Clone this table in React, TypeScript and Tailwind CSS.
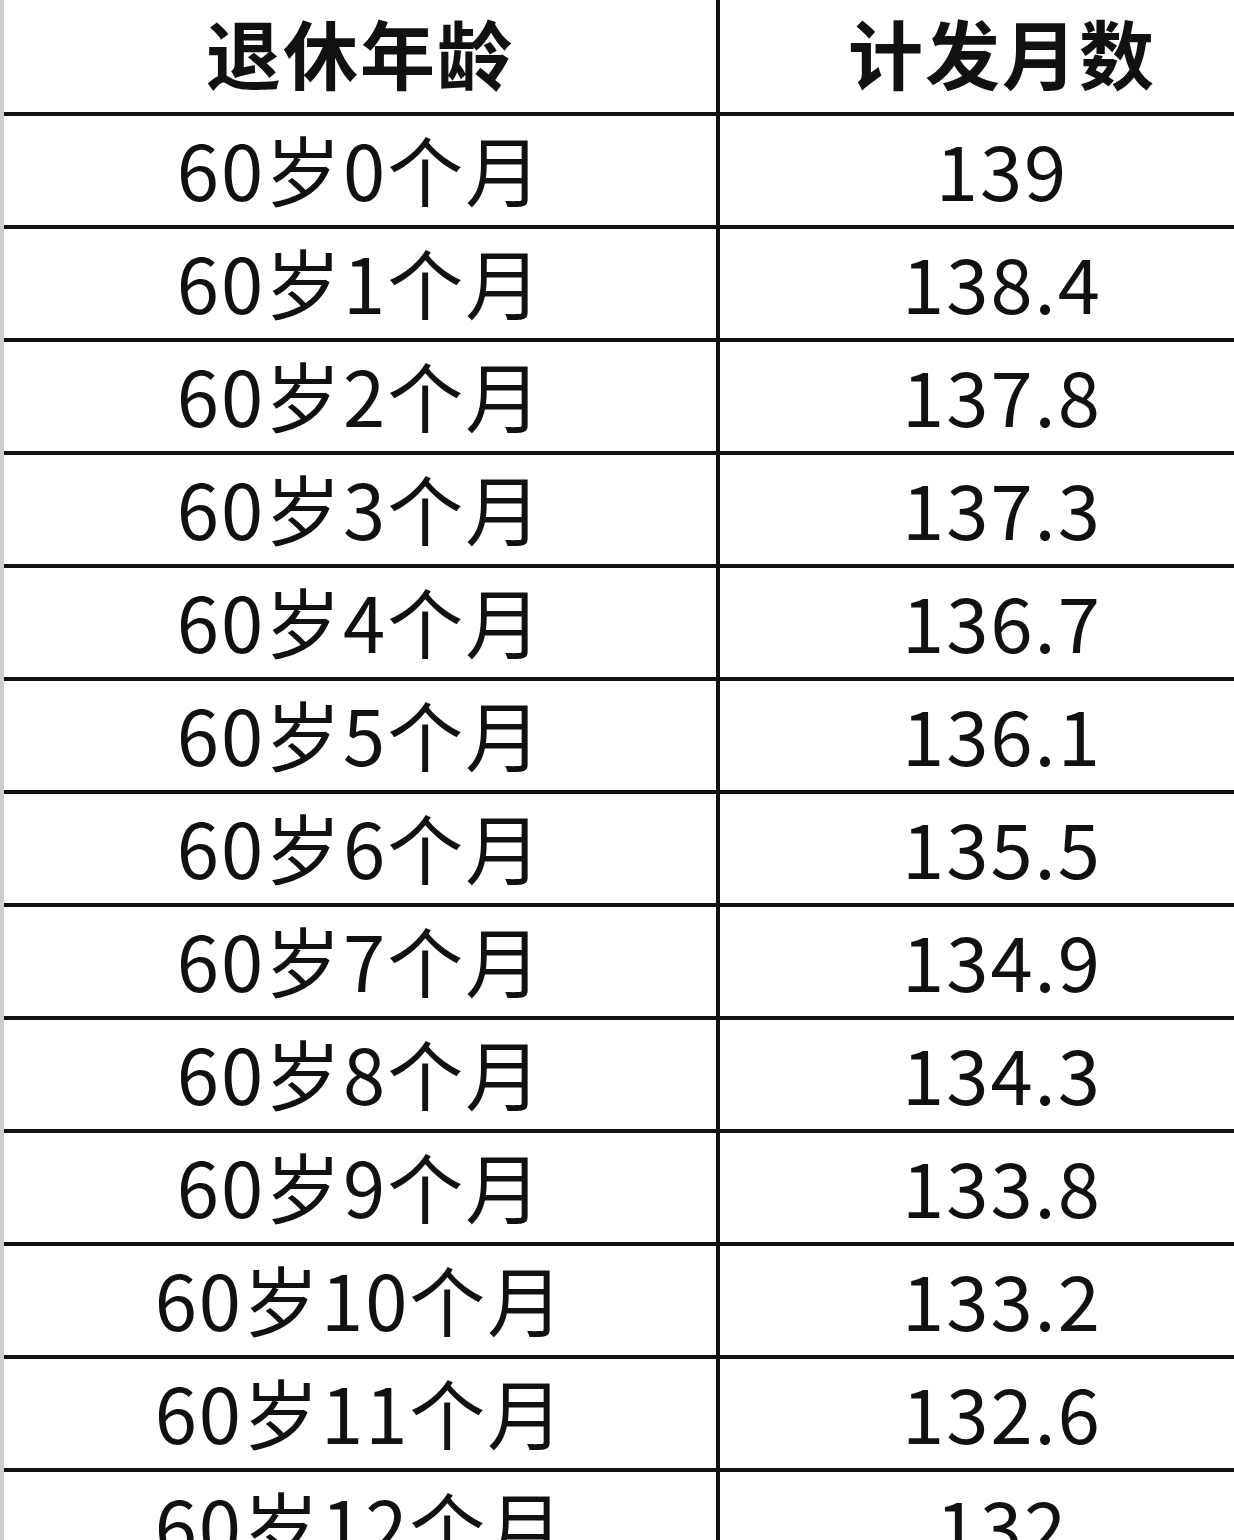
const rows = [
  ["60岁0个月", "139"],
  ["60岁1个月", "138.4"],
  ["60岁2个月", "137.8"],
  ["60岁3个月", "137.3"],
  ["60岁4个月", "136.7"],
  ["60岁5个月", "136.1"],
  ["60岁6个月", "135.5"],
  ["60岁7个月", "134.9"],
  ["60岁8个月", "134.3"],
  ["60岁9个月", "133.8"],
  ["60岁10个月", "133.2"],
  ["60岁11个月", "132.6"],
  ["60岁12个月", "132"],
];

const font = { fontFamily: '"Noto Sans CJK SC", "Noto Sans", sans-serif' };

export default function App() {
  return (
    <div className="w-[1234px] h-[1540px] overflow-hidden bg-white text-[#111]" style={font}>
      <div className="w-[1284px] border-l-4 border-[#cfcfcf]">
        <div className="flex h-[116px] border-b-4 border-[#111]">
          <div className="w-[716px] border-r-4 border-[#111] flex items-center justify-center pb-[10px] text-[75px] font-bold leading-none tracking-[2px]">
            退休年龄
          </div>
          <div className="flex-1 flex items-center justify-center pb-[10px] text-[75px] font-bold leading-none tracking-[2px]">
            计发月数
          </div>
        </div>
        {rows.map(([age, months]) => (
          <div key={age} className="flex h-[113px] border-b-4 border-[#111]">
            <div className="w-[716px] border-r-4 border-[#111] flex items-center justify-center pb-[6px] text-[76px] leading-none tracking-[2px]">
              {age}
            </div>
            <div className="flex-1 flex items-center justify-center pb-[6px] text-[76px] leading-none tracking-[2px]">
              {months}
            </div>
          </div>
        ))}
      </div>
    </div>
  );
}
